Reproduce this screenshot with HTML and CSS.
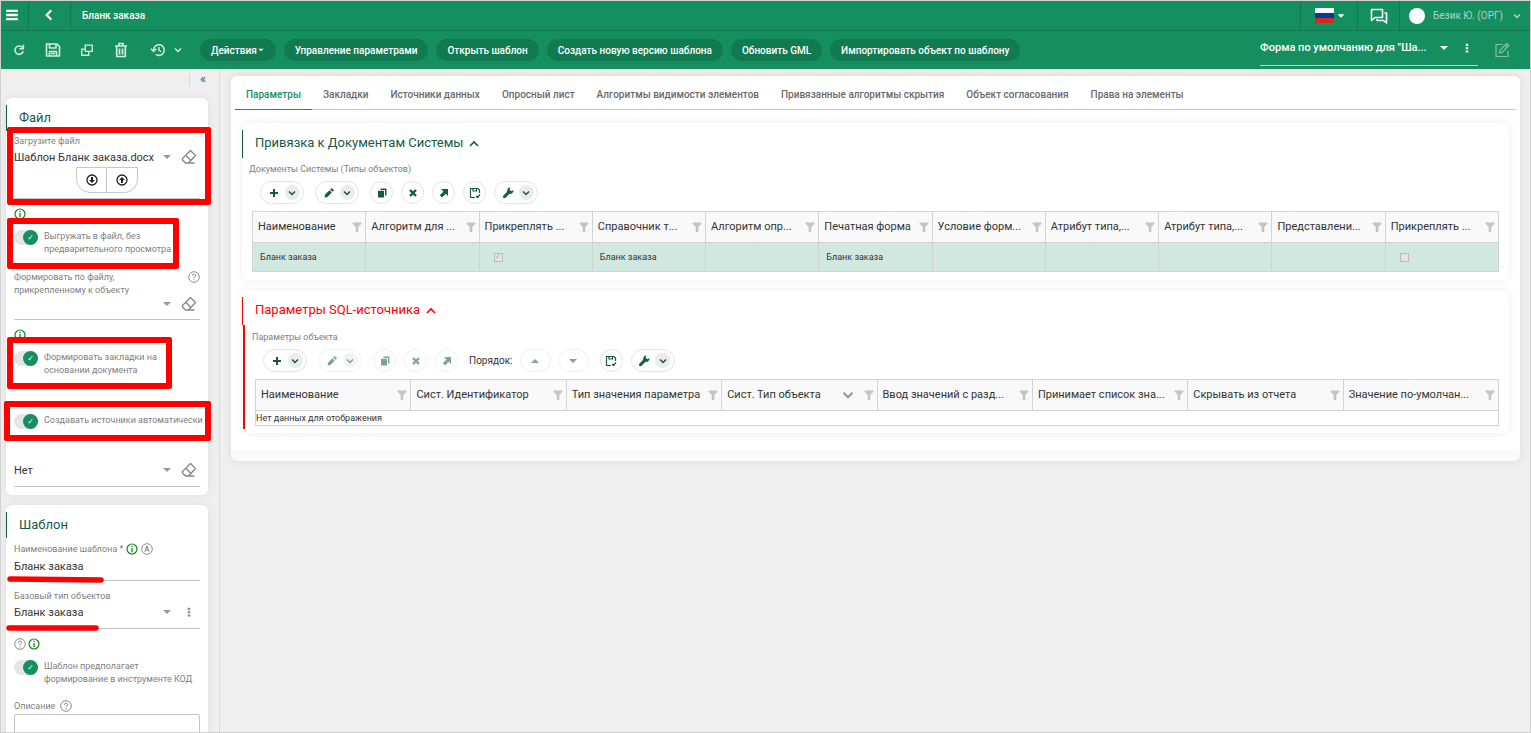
FILE: index.html
```html
<!DOCTYPE html>
<html lang="ru">
<head>
    <meta charset="utf-8">
    <title>Бланк заказа</title>
    <link rel="stylesheet" href="styles.css">
</head>
<body>
    <svg class="sprite" aria-hidden="true">
        <symbol id="i-menu" viewBox="0 0 12 12"><path d="M1 2.5h10M1 6h10M1 9.5h10" stroke="currentColor" stroke-width="2"/></symbol>
        <symbol id="i-back" viewBox="0 0 12 12"><path d="M8 2L4 6l4 4" fill="none" stroke="currentColor" stroke-width="1.8"/></symbol>
        <symbol id="i-down" viewBox="0 0 12 12"><path d="M3 4.5l3 3 3-3" fill="none" stroke="currentColor" stroke-width="1.5"/></symbol>
        <symbol id="i-up" viewBox="0 0 12 12"><path d="M2 8l4-4 4 4" fill="none" stroke="currentColor" stroke-width="1.6"/></symbol>
        <symbol id="i-caret" viewBox="0 0 12 12"><path d="M2 4h8L6 8z" fill="currentColor"/></symbol>
        <symbol id="i-caret-up" viewBox="0 0 12 12"><path d="M2 8h8L6 4z" fill="currentColor"/></symbol>
        <symbol id="i-dots" viewBox="0 0 12 12"><path d="M4.5 1h3v2.5h-3zM4.5 5h3v2.5h-3zM4.5 9h3v2.5h-3z" fill="currentColor"/></symbol>
        <symbol id="i-refresh" viewBox="0 0 16 16"><path d="M12 5.2A4.8 4.8 0 1 0 12.8 9.5M13 2v4.5H8.5" fill="none" stroke="currentColor" stroke-width="1.8"/></symbol>
        <symbol id="i-save" viewBox="0 0 16 16"><path d="M1.5 2H12l2.5 2.500V14h-13zM4.5 14V9.500h7V14M4.500 2v4H11V2M6 11.500h4" fill="none" stroke="currentColor" stroke-width="1.6" stroke-linejoin="round"/></symbol>
        <symbol id="i-copy" viewBox="0 0 16 16"><path d="M6 2.5h8v7H6zM10 9.5V14H2V7h4" fill="none" stroke="currentColor" stroke-width="1.5"/></symbol>
        <symbol id="i-trash" viewBox="0 0 16 16"><path d="M2 4h12M6 3.5v-2h4v2M3.7 4v10.500h8.600V4M6.500 6.500v6M9.500 6.500v6" fill="none" stroke="currentColor" stroke-width="1.7"/></symbol>
        <symbol id="i-history" viewBox="0 0 18 16"><path d="M4 8a6 6 0 1 1 2.5 4.9M1 6.5l3 3 3-3M10 4.5V8l2.5 2" fill="none" stroke="currentColor" stroke-width="1.7"/></symbol>
        <symbol id="i-chat" viewBox="0 0 18 16"><path d="M1.5 1.5h11v8H5l-3.5 3zM14.5 5h2v10l-3-2.5H7V11" fill="none" stroke="currentColor" stroke-width="1.6" stroke-linejoin="round"/></symbol>
        <symbol id="i-edit" viewBox="0 0 16 16"><path d="M8.5 2.5H2v12h12V9M5.5 11l.6-2.8L12.700 1.500l2 2L8.200 10.300zM11 3.200l2 2" fill="none" stroke="currentColor" stroke-width="1.2" stroke-linejoin="round"/></symbol>
        <symbol id="i-eraser" viewBox="0 0 16 16"><path d="M9.5 1.5l5 5L7.500 14h-3l-3-3V9.500zM5 6.500l5 5M7.500 14h6" fill="none" stroke="currentColor" stroke-width="1.4" stroke-linejoin="round"/></symbol>
        <symbol id="i-load-down" viewBox="0 0 12 12"><circle cx="6" cy="6" r="5" fill="none" stroke="currentColor" stroke-width="1.3"/><path d="M5 3h2v3h2L6 9 3 6h2z" fill="currentColor"/></symbol>
        <symbol id="i-load-up" viewBox="0 0 12 12"><circle cx="6" cy="6" r="5" fill="none" stroke="currentColor" stroke-width="1.3"/><path d="M5 9h2V6h2L6 3 3 6h2z" fill="currentColor"/></symbol>
        <symbol id="i-info" viewBox="0 0 12 12"><circle cx="6" cy="6" r="5" fill="none" stroke="currentColor" stroke-width="1.2"/><path d="M6 2.8v1.3M6 5v4.2" stroke="currentColor" stroke-width="1.3"/></symbol>
        <symbol id="i-help" viewBox="0 0 12 12"><circle cx="6" cy="6" r="5.3" fill="none" stroke="currentColor" stroke-width=".9"/><path d="M4.4 4.8c0-2.200 3.300-2 3.200-.1C7.500 5.800 6 5.700 6 7.200M6 8.200v1.200" fill="none" stroke="currentColor"/></symbol>
        <symbol id="i-auto" viewBox="0 0 12 12"><circle cx="6" cy="6" r="5.3" fill="none" stroke="currentColor" stroke-width=".9"/><path d="M3.8 8.800L6 3l2.200 5.800M4.600 7h2.800" fill="none" stroke="currentColor"/></symbol>
        <symbol id="i-plus" viewBox="0 0 12 12"><path d="M6 2v8M2 6h8" stroke="currentColor" stroke-width="2"/></symbol>
        <symbol id="i-pencil" viewBox="0 0 12 12"><path d="M1.5 10.5l.6-3L6.500 3.200l2.300 2.300-4.300 4.400zM7.200 2.500L8.700 1l2.300 2.300-1.500 1.500z" fill="currentColor"/></symbol>
        <symbol id="i-copy-fill" viewBox="0 0 12 12"><path d="M4.5 1.5h6v7H9V3H4.500zM2 3.800h6v6.700H2z" fill="currentColor"/></symbol>
        <symbol id="i-cross" viewBox="0 0 12 12"><path d="M3 3l6 6M9 3L3 9" stroke="currentColor" stroke-width="2.4"/></symbol>
        <symbol id="i-arrow" viewBox="0 0 12 12"><path d="M3 2h7v7L7.8 6.800 4 10.500 1.800 8.300 5.500 4.500z" fill="currentColor"/></symbol>
        <symbol id="i-save-check" viewBox="0 0 12 12"><path d="M6 10.5H1.500v-9H9L10.500 3v3M4 1.500V4h3.500V1.500M7 9l1.500 1.500L11 7.500" fill="none" stroke="currentColor" stroke-width="1.2"/></symbol>
        <symbol id="i-wrench" viewBox="0 0 12 12"><path d="M8.5.5l-1 2.300 1.800 1.500L11.500 3c.2 2.800-2 4.500-4 3.800l-4 4C2 12 .2 10.200 1.300 8.700l3.900-3.900C4.700 2.500 6.300.4 8.500.5z" fill="currentColor"/></symbol>
        <symbol id="i-filter" viewBox="0 0 12 12"><path d="M1.5 1.5h9v1L7.300 6v5H4.700V6L1.500 2.500z" fill="currentColor"/></symbol>
    </svg>

    <div class="page">
        <header class="topbar">
            <button class="top-cell cell-menu" aria-label="Меню"><svg class="ic14"><use href="#i-menu"/></svg></button>
            <button class="top-cell cell-back" aria-label="Назад"><svg class="ic14"><use href="#i-back"/></svg></button>
            <h1 class="page-title">Бланк заказа</h1>
            <button class="top-cell cell-lang" aria-label="Язык"><span class="flag"></span><svg class="ic10"><use href="#i-caret"/></svg></button>
            <button class="top-cell cell-chat" aria-label="Сообщения"><svg class="ic18"><use href="#i-chat"/></svg></button>
            <button class="top-cell cell-user"><span class="avatar"></span><span class="user-name">Безик Ю. (ОРГ)</span><svg class="ic12"><use href="#i-down"/></svg></button>
        </header>

        <div class="actionbar">
            <div class="tools">
                <button aria-label="Обновить"><svg class="ic14"><use href="#i-refresh"/></svg></button>
                <button aria-label="Сохранить"><svg class="ic16"><use href="#i-save"/></svg></button>
                <button aria-label="Копировать"><svg class="ic14"><use href="#i-copy"/></svg></button>
                <button aria-label="Удалить"><svg class="ic16"><use href="#i-trash"/></svg></button>
                <button class="history" aria-label="История"><svg class="ic16"><use href="#i-history"/></svg><svg class="ic12"><use href="#i-down"/></svg></button>
            </div>
            <div class="actions">
                <button class="action">Действия<svg class="ic8"><use href="#i-caret"/></svg></button>
                <button class="action">Управление параметрами</button>
                <button class="action">Открыть шаблон</button>
                <button class="action">Создать новую версию шаблона</button>
                <button class="action">Обновить GML</button>
                <button class="action">Импортировать объект по шаблону</button>
            </div>
            <div class="form-pick">
                <select aria-label="Форма"><option>Форма по умолчанию для "Ша...</option></select>
                <svg class="ic12"><use href="#i-caret"/></svg>
                <button aria-label="Ещё"><svg class="ic10"><use href="#i-dots"/></svg></button>
            </div>
            <button class="edit-form" aria-label="Редактировать форму"><svg class="ic16"><use href="#i-edit"/></svg></button>
        </div>

        <div class="content">
            <aside class="sidebar">
                <div class="collapse"><button aria-label="Свернуть">«</button></div>

                <section class="side-card">
                    <h2>Файл</h2>
                    <div class="field field-file">
                        <label for="file">Загрузите файл</label>
                        <div class="value">
                            <select id="file"><option>Шаблон Бланк заказа.docx</option></select>
                            <svg class="ic12"><use href="#i-caret"/></svg>
                            <button aria-label="Очистить"><svg class="ic16"><use href="#i-eraser"/></svg></button>
                        </div>
                        <div class="loaders">
                            <button aria-label="Скачать"><svg class="ic12"><use href="#i-load-down"/></svg></button>
                            <button aria-label="Загрузить"><svg class="ic12"><use href="#i-load-up"/></svg></button>
                        </div>
                        <span class="mark mark-file"></span>
                    </div>
                    <div class="hints"><svg class="ic12 info"><use href="#i-info"/></svg></div>
                    <label class="switch">
                        <input type="checkbox" checked>
                        <span>Выгружать в файл, без предварительного просмотра</span>
                        <span class="mark mark-export"></span>
                    </label>
                    <div class="field field-by-file">
                        <div class="label-row">
                            <label for="byfile">Формировать по файлу, прикрепленному к объекту</label>
                            <svg class="ic12"><use href="#i-help"/></svg>
                        </div>
                        <div class="value">
                            <select id="byfile"><option></option></select>
                            <svg class="ic12"><use href="#i-caret"/></svg>
                            <button aria-label="Очистить"><svg class="ic16"><use href="#i-eraser"/></svg></button>
                        </div>
                    </div>
                    <div class="hints"><svg class="ic12 info"><use href="#i-info"/></svg></div>
                    <label class="switch">
                        <input type="checkbox" checked>
                        <span>Формировать закладки на основании документа</span>
                        <span class="mark mark-tabs"></span>
                    </label>
                    <label class="switch switch-auto">
                        <input type="checkbox" checked>
                        <span>Создавать источники автоматически</span>
                        <span class="mark mark-auto"></span>
                    </label>
                    <div class="field field-no">
                        <div class="value">
                            <select aria-label="Источник"><option>Нет</option></select>
                            <svg class="ic12"><use href="#i-caret"/></svg>
                            <button aria-label="Очистить"><svg class="ic16"><use href="#i-eraser"/></svg></button>
                        </div>
                    </div>
                </section>

                <section class="side-card">
                    <h2>Шаблон</h2>
                    <div class="field field-name">
                        <div class="label-row">
                            <label for="name">Наименование шаблона *</label>
                            <svg class="ic12 info"><use href="#i-info"/></svg>
                            <svg class="ic12"><use href="#i-auto"/></svg>
                        </div>
                        <div class="value"><input id="name" type="text" value="Бланк заказа"></div>
                        <svg class="stroke" viewBox="0 0 98 8"><path d="M4 3l91 1" stroke="red" stroke-width="5.5" stroke-linecap="round"/></svg>
                    </div>
                    <div class="field field-type">
                        <label for="type">Базовый тип объектов</label>
                        <div class="value">
                            <select id="type"><option>Бланк заказа</option></select>
                            <svg class="ic12"><use href="#i-caret"/></svg>
                            <button aria-label="Ещё"><svg class="ic10"><use href="#i-dots"/></svg></button>
                        </div>
                        <svg class="stroke" viewBox="0 0 98 8"><path d="M3 4h87" stroke="red" stroke-width="5.5" stroke-linecap="round"/></svg>
                    </div>
                    <div class="hints"><svg class="ic12"><use href="#i-help"/></svg><svg class="ic12 info"><use href="#i-info"/></svg></div>
                    <label class="switch">
                        <input type="checkbox" checked>
                        <span>Шаблон предполагает формирование в инструменте КОД</span>
                    </label>
                    <div class="field-text">
                        <div class="label-row">
                            <label for="descr">Описание</label>
                            <svg class="ic12"><use href="#i-help"/></svg>
                        </div>
                        <textarea id="descr"></textarea>
                    </div>
                </section>
            </aside>

            <main class="main">
                <div class="panel">
                    <nav class="tabs">
                        <a class="active" href="#">Параметры</a>
                        <a href="#">Закладки</a>
                        <a href="#">Источники данных</a>
                        <a href="#">Опросный лист</a>
                        <a href="#">Алгоритмы видимости элементов</a>
                        <a href="#">Привязанные алгоритмы скрытия</a>
                        <a href="#">Объект согласования</a>
                        <a href="#">Права на элементы</a>
                    </nav>

                    <section class="block">
                        <h2>Привязка к Документам Системы <svg class="ic12"><use href="#i-up"/></svg></h2>
                        <div class="block-body">
                            <p class="caption">Документы Системы (Типы объектов)</p>
                            <div class="toolbar">
                                <button class="pill split" aria-label="Добавить"><svg class="ic12"><use href="#i-plus"/></svg><span><svg class="ic12"><use href="#i-down"/></svg></span></button>
                                <button class="pill split" aria-label="Изменить"><svg class="ic12"><use href="#i-pencil"/></svg><span><svg class="ic12"><use href="#i-down"/></svg></span></button>
                                <button class="pill" aria-label="Копировать"><svg class="ic12"><use href="#i-copy-fill"/></svg></button>
                                <button class="pill" aria-label="Удалить"><svg class="ic12"><use href="#i-cross"/></svg></button>
                                <button class="pill" aria-label="Открыть"><svg class="ic12"><use href="#i-arrow"/></svg></button>
                                <button class="pill" aria-label="Сохранить"><svg class="ic12"><use href="#i-save-check"/></svg></button>
                                <button class="pill split" aria-label="Настройки"><svg class="ic12"><use href="#i-wrench"/></svg><span><svg class="ic12"><use href="#i-down"/></svg></span></button>
                            </div>
                            <table class="grid">
                                <thead>
                                    <tr>
                                        <th><div>Наименование<svg class="ic12"><use href="#i-filter"/></svg></div></th>
                                        <th><div>Алгоритм для ...<svg class="ic12"><use href="#i-filter"/></svg></div></th>
                                        <th><div>Прикреплять ...<svg class="ic12"><use href="#i-filter"/></svg></div></th>
                                        <th><div>Справочник т...<svg class="ic12"><use href="#i-filter"/></svg></div></th>
                                        <th><div>Алгоритм опр...<svg class="ic12"><use href="#i-filter"/></svg></div></th>
                                        <th><div>Печатная форма<svg class="ic12"><use href="#i-filter"/></svg></div></th>
                                        <th><div>Условие форм...<svg class="ic12"><use href="#i-filter"/></svg></div></th>
                                        <th><div>Атрибут типа,...<svg class="ic12"><use href="#i-filter"/></svg></div></th>
                                        <th><div>Атрибут типа,...<svg class="ic12"><use href="#i-filter"/></svg></div></th>
                                        <th><div>Представлени...<svg class="ic12"><use href="#i-filter"/></svg></div></th>
                                        <th><div>Прикреплять ...<svg class="ic12"><use href="#i-filter"/></svg></div></th>
                                    </tr>
                                </thead>
                                <tbody>
                                    <tr class="selected">
                                        <td>Бланк заказа</td>
                                        <td></td>
                                        <td><input type="checkbox" aria-label="Прикреплять" checked disabled></td>
                                        <td>Бланк заказа</td>
                                        <td></td>
                                        <td>Бланк заказа</td>
                                        <td></td>
                                        <td></td>
                                        <td></td>
                                        <td></td>
                                        <td><input type="checkbox" aria-label="Прикреплять" disabled></td>
                                    </tr>
                                </tbody>
                            </table>
                        </div>
                    </section>

                    <section class="block block-error">
                        <h2>Параметры SQL-источника <svg class="ic12"><use href="#i-up"/></svg></h2>
                        <div class="block-body">
                            <p class="caption">Параметры объекта</p>
                            <div class="toolbar">
                                <button class="pill split" aria-label="Добавить"><svg class="ic12"><use href="#i-plus"/></svg><span><svg class="ic12"><use href="#i-down"/></svg></span></button>
                                <button class="pill split" aria-label="Изменить" disabled><svg class="ic12"><use href="#i-pencil"/></svg><span><svg class="ic12"><use href="#i-down"/></svg></span></button>
                                <button class="pill" aria-label="Копировать" disabled><svg class="ic12"><use href="#i-copy-fill"/></svg></button>
                                <button class="pill" aria-label="Удалить" disabled><svg class="ic12"><use href="#i-cross"/></svg></button>
                                <button class="pill" aria-label="Открыть" disabled><svg class="ic12"><use href="#i-arrow"/></svg></button>
                                <div class="order">
                                    <span>Порядок:</span>
                                    <button class="pill" aria-label="Выше" disabled><svg class="ic12"><use href="#i-caret-up"/></svg></button>
                                    <button class="pill" aria-label="Ниже" disabled><svg class="ic12"><use href="#i-caret"/></svg></button>
                                </div>
                                <button class="pill" aria-label="Сохранить"><svg class="ic12"><use href="#i-save-check"/></svg></button>
                                <button class="pill split" aria-label="Настройки"><svg class="ic12"><use href="#i-wrench"/></svg><span><svg class="ic12"><use href="#i-down"/></svg></span></button>
                            </div>
                            <table class="grid">
                                <thead>
                                    <tr>
                                        <th><div>Наименование<svg class="ic12"><use href="#i-filter"/></svg></div></th>
                                        <th><div>Сист. Идентификатор<svg class="ic12"><use href="#i-filter"/></svg></div></th>
                                        <th><div>Тип значения параметра<svg class="ic12"><use href="#i-filter"/></svg></div></th>
                                        <th><div>Сист. Тип объекта<svg class="ic18 sort"><use href="#i-down"/></svg><svg class="ic12"><use href="#i-filter"/></svg></div></th>
                                        <th><div>Ввод значений с разд...<svg class="ic12"><use href="#i-filter"/></svg></div></th>
                                        <th><div>Принимает список зна...<svg class="ic12"><use href="#i-filter"/></svg></div></th>
                                        <th><div>Скрывать из отчета<svg class="ic12"><use href="#i-filter"/></svg></div></th>
                                        <th><div>Значение по-умолчан...<svg class="ic12"><use href="#i-filter"/></svg></div></th>
                                    </tr>
                                </thead>
                                <tbody>
                                    <tr><td class="empty" colspan="8">Нет данных для отображения</td></tr>
                                </tbody>
                            </table>
                        </div>
                    </section>
                </div>
            </main>
        </div>
    </div>
</body>
</html>
```
FILE: styles.css
```css
* {
    box-sizing: border-box;
}

body {
    margin: 0;
    font-family: Roboto, "Liberation Sans", sans-serif;
    font-size: 11px;
    color: #333;
    background: #efefef;
}

button, input, select, textarea {
    font: inherit;
    color: inherit;
    background: none;
    border: 0;
    padding: 0;
    margin: 0;
    outline: 0;
}

select {
    appearance: none;
    flex: 1;
    min-width: 0;
}

button {
    display: flex;
    align-items: center;
    justify-content: center;
}

h1, h2, p {
    margin: 0;
    font-weight: normal;
}

svg {
    flex: none;
    display: block;
}

.sprite {
    display: none;
}

.ic8 { width: 8px; height: 8px; }
.ic10 { width: 10px; height: 10px; }
.ic12 { width: 12px; height: 12px; }
.ic14 { width: 14px; height: 14px; }
.ic16 { width: 16px; height: 16px; }
.ic18 { width: 18px; height: 18px; }

.page {
    display: flex;
    flex-direction: column;
    height: 100vh;
    border: 1px solid #d0d0d0;
    overflow: hidden;
}

/* top bar */
.topbar {
    display: flex;
    flex: none;
    height: 30px;
    background: #158f5f;
    color: #fff;
    border-bottom: 1px solid #117a50;
}

.top-cell {
    border-right: 1px solid #117a50;
}

.cell-menu {
    width: 28px;
    padding: 0 6px 2px 0;
}

.cell-back {
    width: 42px;
    padding: 0 2px 2px 0;
}

.page-title {
    flex: 1;
    padding-left: 11px;
    font-size: 10px;
    font-weight: 500;
    line-height: 29px;
}

.cell-lang {
    width: 58px;
    border-left: 1px solid #117a50;
    gap: 2px;
    padding-left: 2px;
}

.flag {
    width: 19px;
    height: 15px;
    background: linear-gradient(#fff 33%, #0039a6 33% 67%, #d52b1e 67%);
}

.cell-chat {
    width: 42px;
}

.cell-user {
    width: 130px;
    border: 0;
    color: #a9d6c4;
    font-size: 10px;
    gap: 8px;
    padding-left: 2px;
}

.avatar {
    width: 16px;
    height: 16px;
    border-radius: 50%;
    background: #fff;
}

/* action bar */
.actionbar {
    display: flex;
    flex: none;
    align-items: center;
    height: 38px;
    padding-right: 20px;
    background: #158f5f;
    color: #fff;
}

.tools {
    display: flex;
    align-items: center;
    width: 199px;
    padding-left: 11px;
    gap: 19px;
    color: #cfeee0;
}

.history {
    gap: 6px;
    padding-left: 2px;
}

.actions {
    display: flex;
    gap: 8px;
}

.action {
    height: 22px;
    padding: 0 11px;
    border-radius: 11px;
    background: #117a50;
    font-size: 10px;
    font-weight: 500;
    white-space: nowrap;
}

.form-pick {
    display: flex;
    align-items: center;
    width: 218px;
    height: 32px;
    margin-left: auto;
    margin-right: 16px;
    padding-bottom: 4px;
    border-bottom: 1px solid #c4cfc9;
    font-weight: 500;
}

.form-pick button {
    padding: 0 6px 0 12px;
}

.edit-form {
    color: #7fc4a6;
}

/* layout */
.content {
    display: flex;
    flex: 1;
    min-height: 0;
}

.sidebar {
    flex: none;
    width: 219px;
    padding: 0 11px 0 5px;
    border-right: 1px solid #d9dde6;
    overflow: hidden;
}

.collapse {
    display: flex;
    justify-content: flex-end;
    height: 29px;
    padding-top: 4px;
}

.collapse button {
    width: 19px;
    height: 14px;
    border-left: 1px solid #d9dde6;
    padding: 0 0 3px 8px;
    font-size: 13px;
    color: #555;
}

.side-card {
    padding: 7px 8px 8px;
    margin-bottom: 10px;
    border-radius: 6px;
    background: #fff;
    box-shadow: 0 0 8px rgba(0, 0, 0, 0.08);
    color: #808080;
    font-size: 9px;
    line-height: 13px;
}

.side-card h2 {
    margin-left: -8px;
    padding-left: 12px;
    border-left: 1px solid #165a44;
    font-size: 13px;
    line-height: 26px;
    color: #165a44;
}

.field {
    position: relative;
    border-bottom: 1px solid #c4c4c4;
}

.field label {
    display: block;
}

.label-row {
    display: flex;
    gap: 3px;
}

.value {
    display: flex;
    align-items: center;
    height: 18px;
    font-size: 11px;
    color: #333;
}

.value > svg {
    color: #999;
}

.value button {
    width: 27px;
    padding-left: 5px;
    color: #888;
}

.value input {
    width: 100%;
}

.info {
    color: #0b8a1c;
}

.hints {
    display: flex;
    gap: 2px;
    height: 22px;
    margin-top: 9px;
}

.field-file {
    height: 64px;
    margin-top: 4px;
}

.loaders {
    display: flex;
    justify-content: center;
    padding-top: 1px;
}

.loaders button {
    width: 31px;
    height: 26px;
    border: 1px solid #c8c8c8;
    border-radius: 0 0 0 14px;
    color: #222;
}

.loaders button + button {
    border-left: 0;
    border-radius: 0 0 14px 0;
}

.field-by-file {
    height: 49px;
    margin-top: 15px;
}

.field-by-file .label-row {
    justify-content: space-between;
    height: 24px;
}

.field-by-file label {
    width: 130px;
}

.switch {
    position: relative;
    display: flex;
    gap: 6px;
    min-height: 26px;
}

.switch input {
    appearance: none;
    display: flex;
    justify-content: flex-end;
    flex: none;
    width: 24px;
    height: 15px;
    border-radius: 8px;
    background: #e2e6e5;
}

.switch input::before {
    content: "✓";
    width: 15px;
    height: 15px;
    border-radius: 50%;
    background: #158f5f;
    color: #fff;
    font: bold 8px/15px "DejaVu Sans", sans-serif;
    text-align: center;
}

.switch-auto {
    margin-top: 37px;
    white-space: nowrap;
}

.field-no {
    height: 35px;
    margin-top: 12px;
    padding-top: 9px;
}

.field-name {
    height: 38px;
    margin-top: 5px;
}

.field-name .value {
    padding-top: 3px;
}

.field-type {
    height: 39px;
    margin-top: 9px;
}

.field-text {
    margin-top: 14px;
}

.field-text .label-row {
    gap: 5px;
}

.field-text textarea {
    display: block;
    width: 100%;
    height: 60px;
    margin-top: 1px;
    border: 1px solid #c4c4c4;
    border-radius: 2px;
    resize: none;
}

/* red marks over the fields */
.mark {
    position: absolute;
    border: 6px solid #f00;
    border-radius: 2px;
    pointer-events: none;
}

.mark-file { inset: -8px -11px -7px -7px; }
.mark-export { inset: -12px 21px -13px -7px; }
.mark-tabs { inset: -14px 28px -12px -7px; }
.mark-auto { inset: -13px -11px -1px -10px; }

.stroke {
    position: absolute;
    left: -8px;
    bottom: -4px;
    width: 98px;
    height: 8px;
}

/* main panel */
.main {
    flex: 1;
    min-width: 0;
    padding: 7px 10px 0 11px;
}

.panel {
    padding: 0 11px 17px;
    border-radius: 6px;
    background: #fff;
    box-shadow: 0 0 10px rgba(0, 0, 0, 0.1);
    border-bottom: 11px solid #fafafa;
}

.tabs {
    display: flex;
    height: 34px;
    margin: 0 -7px;
    border-bottom: 1px solid #c8c8c8;
}

.tabs a {
    padding: 0 11px;
    font-size: 10px;
    font-weight: 500;
    line-height: 37px;
    color: #6a6a6a;
    text-decoration: none;
    white-space: nowrap;
}

.tabs .active {
    border-bottom: 1px solid #158f5f;
    margin-bottom: -1px;
    color: #158f5f;
}

.block {
    margin-top: 13px;
    padding-top: 7px;
    border-radius: 6px;
    box-shadow: 0 0 8px rgba(0, 0, 0, 0.08);
}

.block + .block {
    margin-top: 10px;
}

.block h2 {
    display: flex;
    align-items: center;
    gap: 5px;
    padding: 0 0 3px 12px;
    border-left: 1px solid #165a44;
    font-size: 13px;
    line-height: 25px;
    color: #165a44;
}

.block h2 svg {
    margin-top: 2px;
}

.block-body {
    padding: 4px 10px 8px;
}

.caption {
    margin-left: -3px;
    font-size: 9px;
    line-height: 14px;
    color: #808080;
}

.block-error {
    padding-bottom: 4px;
}

.block-error h2 {
    border-color: #f00;
    color: #f00;
}

.block-error .block-body {
    margin-left: 1px;
    padding-top: 5px;
    padding-bottom: 3px;
    border-left: 2px solid #f00;
}

.toolbar {
    display: flex;
    align-items: center;
    gap: 8px;
    padding: 5px 0 7px 8px;
}

.pill {
    width: 23px;
    height: 23px;
    border: 1px solid #e2e4e4;
    border-radius: 12px;
    color: #165a44;
}

.split {
    width: 44px;
    gap: 5px;
    padding-left: 3px;
}

.split + .split, .split + .pill {
    margin-left: 3px;
}

.split span {
    display: flex;
    align-items: center;
    justify-content: center;
    width: 15px;
    height: 15px;
    border-radius: 50%;
    background: #ebebeb;
}

.pill:disabled {
    opacity: 0.55;
}

.order {
    display: flex;
    align-items: center;
    gap: 7px;
    padding: 0 3px;
    font-size: 10px;
}

.order .pill {
    width: 31px;
}

/* tables */
.grid {
    width: 100%;
    table-layout: fixed;
    border-collapse: collapse;
    border: 1px solid #c8c8c8;
}

.grid th {
    height: 31px;
    padding: 0 2px 1px 5px;
    border: 1px solid #d3d3d3;
    background: #f9f9f9;
    font-weight: normal;
    text-align: left;
    white-space: nowrap;
}

.grid th div {
    display: flex;
    align-items: center;
}

.grid th svg {
    margin-left: auto;
    color: #c4c4c4;
}

.grid th .sort {
    color: #999;
}

.grid th .sort + svg {
    margin-left: 6px;
}

.grid td {
    height: 29px;
    padding: 0 7px;
    border: 1px solid #d3d3d3;
    font-size: 9px;
}

.selected td {
    background: #d0e8df;
}

.grid td.empty {
    height: 15px;
    padding: 0;
    line-height: 14px;
}

.grid input {
    appearance: none;
    display: block;
    width: 9px;
    height: 9px;
    margin-left: 7px;
    border: 1px solid #bbb;
    background: #e4e4e4;
}

.grid input:checked::before {
    content: "✓";
    display: block;
    font: 7px/7px "DejaVu Sans", sans-serif;
    text-align: center;
    color: #aaa;
}
```
